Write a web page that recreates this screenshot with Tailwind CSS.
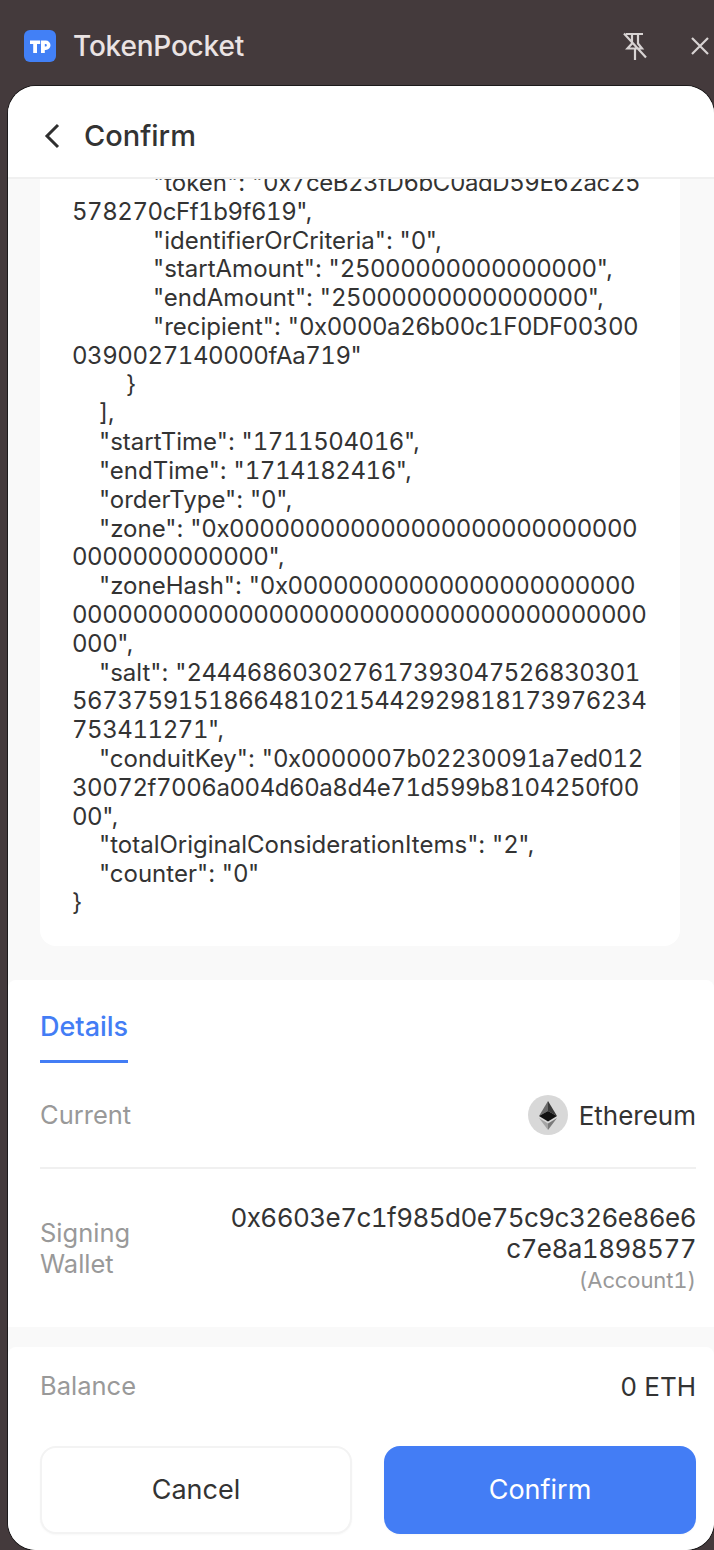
<!DOCTYPE html>
<html lang="en">
<head>
    <meta charset="UTF-8">
    <meta name="viewport" content="width=device-width, initial-scale=1.0">
    <title>TokenPocket</title>
    <script src="https://cdn.jsdelivr.net/npm/@tailwindcss/browser@4"></script>
</head>
<body class="bg-[#443a3c] font-['Inter',sans-serif]">
    <div class="w-[714px] h-[1550px] overflow-hidden flex flex-col">
        <!-- Extension title bar -->
        <div class="h-[86px] shrink-0 flex items-center pl-6 pt-[6px]">
            <svg class="w-8 h-8 shrink-0" viewBox="0 0 32 32">
                <rect width="32" height="32" rx="6" fill="#4280f6"/>
                <path d="M6 10.500h10.200v3.600h-3.200V23H9.200v-8.900H6z" fill="#fff"/>
                <path fill-rule="evenodd" d="M17 10.500h4.800a4.700 4.700 0 0 1 0 9.400h-1V23H17zM20.800 14v2.500h.8a1.250 1.250 0 0 0 0-2.500z" fill="#fff"/>
            </svg>
            <span class="ml-[17px] text-[28px] leading-8 font-medium tracking-[-0.2px] text-[#eae3e3]">TokenPocket</span>
            <svg class="ml-auto w-7 h-8 shrink-0" viewBox="0 0 28 32" fill="none" stroke="#d8d3d3" stroke-width="2.200">
                <path d="M5 4h17M11 4.500v9L6.500 18.500h14.500L17 13.500V4.500M14 19v11M3 3.500l22 24"/>
            </svg>
            <svg class="ml-[42px] w-[18px] h-[18px] shrink-0 mr-[5px]" viewBox="0 0 18 18" fill="none" stroke="#d8d3d3" stroke-width="2.200">
                <path d="M1 1l16 16M17 1L1 17"/>
            </svg>
        </div>

        <!-- Popup panel -->
        <div class="ml-2 w-[706px] h-[1464px] shrink-0 rounded-[28px] bg-[#f9f9f9] overflow-hidden flex flex-col shadow-[0_0_0_1px_#1c1a1b]">
            <div class="h-[93px] shrink-0 bg-white border-b-2 border-[#f0f0f0] flex items-center pl-[36px] pt-[9px]">
                <svg class="w-4 h-[26px]" viewBox="0 0 16 26" fill="none" stroke="#2f2f2f" stroke-width="3">
                    <path d="M14 2L3 13l11 11"/>
                </svg>
                <span class="ml-[24px] text-[29px] font-medium text-[#333]">Confirm</span>
            </div>

            <!-- Message being signed, scrolled part way down -->
            <div class="h-[801px] shrink-0 overflow-hidden pl-8 pr-[34px]">
                <div class="-mt-[10px] h-[777px] bg-white rounded-b-2xl pl-[32px] overflow-hidden">
<pre class="font-['Inter',sans-serif] text-[24px] leading-[28.800px] text-[#333] [&_b]:font-normal [&_b]:tabular-nums [&_b]:tracking-[-0.45px]">            "token": "<b>0x7ceB23fD6bC0adD59E62ac25</b>
<b>578270cFf1b9f619</b>",
            "identifierOrCriteria": "<b>0</b>",
            "startAmount": "<b>25000000000000000</b>",
            "endAmount": "<b>25000000000000000</b>",
            "recipient": "<b>0x0000a26b00c1F0DF00300</b>
<b>0390027140000fAa719</b>"
        }
    ],
    "startTime": "<b>1711504016</b>",
    "endTime": "<b>1714182416</b>",
    "orderType": "<b>0</b>",
    "zone": "<b>0x000000000000000000000000000</b>
<b>0000000000000</b>",
    "zoneHash": "<b>0x00000000000000000000000</b>
<b>00000000000000000000000000000000000000</b>
<b>000</b>",
    "salt": "<b>244468603027617393047526830301</b>
<b>56737591518664810215442929818173976234</b>
<b>753411271</b>",
    "conduitKey": "<b>0x0000007b02230091a7ed012</b>
<b>30072f7006a004d60a8d4e71d599b8104250f00</b>
<b>00</b>",
    "totalOriginalConsiderationItems": "<b>2</b>",
    "counter": "<b>0</b>"
}</pre>
                </div>
            </div>

            <!-- Details -->
            <div class="h-[347px] shrink-0 bg-white rounded-t-lg pl-8 pr-[18px]">
                <div class="w-[88px] h-[83px] border-b-[3px] border-[#437df5] flex items-end pb-[17px]">
                    <span class="text-[27px] leading-8 font-medium text-[#437df5]">Details</span>
                </div>
                <div class="h-[106px] flex items-center justify-between border-b-2 border-[#f0f0f0]">
                    <span class="text-[25.500px] text-[#999]">Current</span>
                    <span class="flex items-center gap-[11px] text-[26px] text-[#333]">
                        <svg class="w-10 h-10" viewBox="0 0 40 40">
                            <circle cx="20" cy="20" r="20" fill="#d8d8d8"/>
                            <path d="M20 6l-9 15 9-5z" fill="#6a6a6a"/>
                            <path d="M20 6l9 15-9-5z" fill="#3a3a3a"/>
                            <path d="M11 21l9-5 9 5-9 5.500z" fill="#111"/>
                            <path d="M11 23l9 12v-6.500z" fill="#a5a5a5"/>
                            <path d="M29 23l-9 12v-6.500z" fill="#7a7a7a"/>
                        </svg>
                        Ethereum
                    </span>
                </div>
                <div class="flex justify-between pt-[48px]">
                    <span class="w-[110px] text-[25.500px] leading-[31px] text-[#999]">Signing Wallet</span>
                    <div class="text-right -mt-[15px]">
                        <p class="text-[26px] leading-[31px] text-[#333] tabular-nums tracking-[-0.55px]">0x6603e7c1f985d0e75c9c326e86e6<br>c7e8a1898577</p>
                        <p class="text-[22px] leading-[32px] text-[#999] tabular-nums tracking-[-0.1px]">(Account1)</p>
                    </div>
                </div>
            </div>

            <div class="h-5 shrink-0"></div>

            <!-- Balance and actions -->
            <div class="grow bg-white rounded-t-lg pl-8 pr-[18px]">
                <div class="h-[79px] flex items-center justify-between">
                    <span class="text-[25.500px] text-[#999]">Balance</span>
                    <span class="text-[26px] text-[#333]">0 ETH</span>
                </div>
                <div class="mt-5 flex gap-8">
                    <button class="w-[312px] h-[88px] rounded-2xl bg-white border-2 border-[#f3f3f3] shadow-[0_1px_2px_rgba(0,0,0,0.03)] text-[27px] text-[#333]">Cancel</button>
                    <button class="w-[312px] h-[88px] rounded-2xl bg-[#437df5] shadow-[0_1px_2px_rgba(0,0,0,0.03)] text-[27px] text-white">Confirm</button>
                </div>
            </div>
        </div>
    </div>
</body>
</html>
